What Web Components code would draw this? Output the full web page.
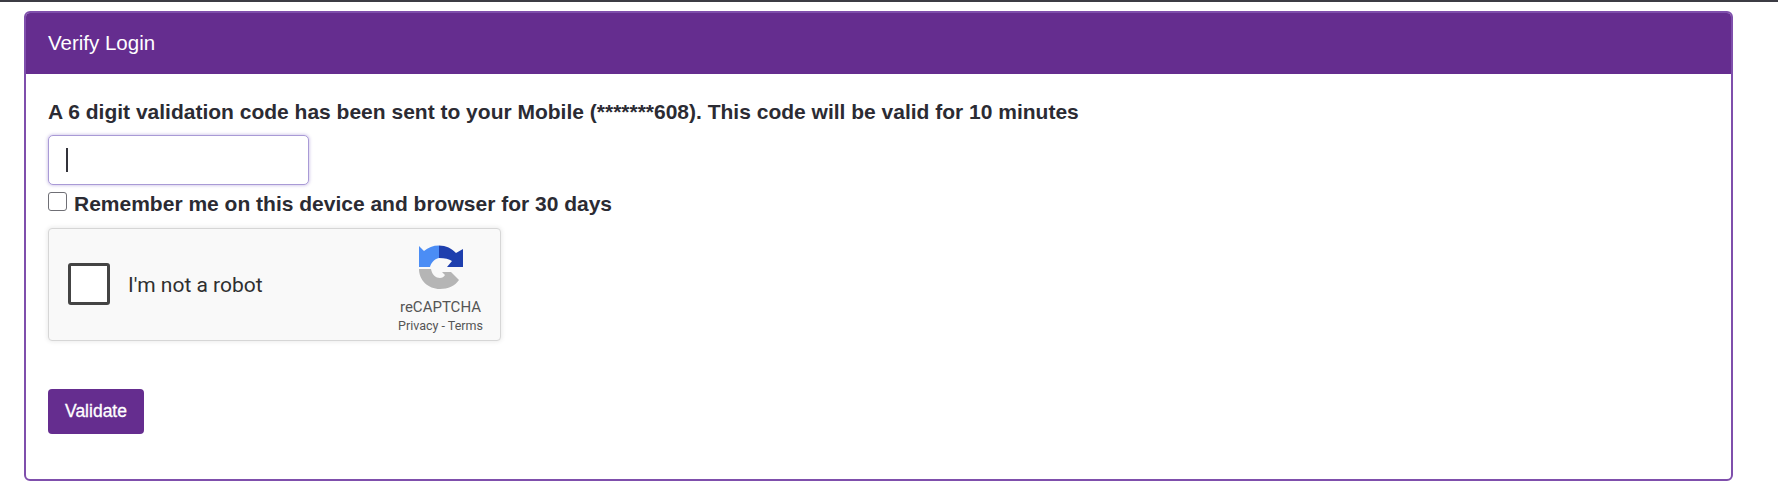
<!DOCTYPE html>
<html>
<head>
<meta charset="utf-8">
<title>Verify Login</title>
<style>
	html, body { margin: 0; background: #fff; }
	body { font-family: "Liberation Sans", Arial, sans-serif; color: #212529; }
</style>
</head>
<body>
<verify-page>
	<verify-card heading="Verify Login">
		<p-label>A 6 digit validation code has been sent to your Mobile (*******608). This code will be valid for 10 minutes</p-label>
		<code-input></code-input>
		<remember-check>Remember me on this device and browser for 30 days</remember-check>
		<fake-recaptcha></fake-recaptcha>
		<purple-button>Validate</purple-button>
	</verify-card>
</verify-page>

<script>
customElements.define('verify-page', class extends HTMLElement
{
	connectedCallback()
	{
		const shadow = this.attachShadow({ mode: 'open' });
		shadow.innerHTML = `
			<style>
				:host { display: block; height: 496px; box-sizing: border-box; border-top: 2px solid #3c3c44; padding: 9px 45px 0 24px; }
			</style>
			<slot></slot>
		`;
	}
});

customElements.define('verify-card', class extends HTMLElement
{
	connectedCallback()
	{
		const shadow = this.attachShadow({ mode: 'open' });
		shadow.innerHTML = `
			<style>
				:host { display: block; height: 470px; box-sizing: border-box; border: 2px solid #7f4fac; border-radius: 6px; overflow: hidden; }
				.head { height: 63px; box-sizing: border-box; margin: -2px -2px 0; background: #652d8f; color: #fff; font-size: 20.5px; padding: 0 24px; display: flex; align-items: center; }
				.body { padding: 26px 22px 0; display: flex; flex-direction: column; align-items: flex-start; }
			</style>
			<div class="head">${this.getAttribute('heading')}</div>
			<div class="body"><slot></slot></div>
		`;
	}
});

customElements.define('p-label', class extends HTMLElement
{
	connectedCallback()
	{
		const shadow = this.attachShadow({ mode: 'open' });
		shadow.innerHTML = `
			<style>
				:host { display: block; font-size: 21px; font-weight: 700; line-height: 24px; color: #2b2b33; margin-bottom: 11px; }
			</style>
			<slot></slot>
		`;
	}
});

customElements.define('code-input', class extends HTMLElement
{
	connectedCallback()
	{
		const shadow = this.attachShadow({ mode: 'open' });
		shadow.innerHTML = `
			<style>
				:host { display: block; width: 261px; height: 50px; box-sizing: border-box; border: 1.5px solid #a99ad6; border-radius: 5px; background: #fff; box-shadow: 0 0 3px 1px rgba(120, 90, 190, .28); padding: 12px 0 0 17px; margin-bottom: 7px; }
				.caret { width: 1.5px; height: 24px; background: #33333a; }
			</style>
			<div class="caret"></div>
		`;
	}
});

customElements.define('remember-check', class extends HTMLElement
{
	connectedCallback()
	{
		const shadow = this.attachShadow({ mode: 'open' });
		shadow.innerHTML = `
			<style>
				:host { display: flex; align-items: center; gap: 7px; font-size: 21px; font-weight: 700; line-height: 24px; color: #2b2b33; margin-bottom: 12px; }
				.box { width: 19px; height: 19px; margin-top: -6px; box-sizing: border-box; border: 1.5px solid #6f6f75; border-radius: 3px; background: #fff; }
			</style>
			<div class="box"></div>
			<span><slot></slot></span>
		`;
	}
});

customElements.define('fake-recaptcha', class extends HTMLElement
{
	connectedCallback()
	{
		const shadow = this.attachShadow({ mode: 'open' });
		shadow.innerHTML = `
			<style>
				:host { display: flex; align-items: center; width: 453px; height: 113px; box-sizing: border-box; background: #f9f9f9; border: 1.5px solid #d6d6d6; border-radius: 4px; box-shadow: 0 0 4px 1px rgba(0, 0, 0, .08); padding-left: 19px; margin-bottom: 48px; font-family: Roboto, "Liberation Sans", sans-serif; color: #2f2f2f; }
				.box { width: 42px; height: 42px; margin-top: -2px; box-sizing: border-box; border: 3px solid #444; border-radius: 3px; background: #fff; margin-right: 18px; }
				.label { font-size: 21px; flex: 1; }
				.brand { width: 119px; padding-top: 3px; display: flex; flex-direction: column; align-items: center; color: #555; }
				svg { width: 64px; height: 60px; display: block; }
				.name { font-size: 15px; line-height: 20px; }
				.links { font-size: 12.5px; line-height: 18px; }
			</style>
			<div class="box"></div>
			<div class="label">I'm not a robot</div>
			<div class="brand">
				<svg viewBox="0 0 64 60">
					<path fill="#1e3fae" d="M30 8.5C37 8.5 43 11.5 47 16L54 12V30H38L43 24C40 22 36 21 30 21Z"/>
					<path fill="#4b8df5" d="M30 8.5C24 8.5 19 10.5 15 14L10 9V30H21C22 26 25 22 30 21Z"/>
					<path fill="#b5b5b5" d="M10 32H22C23 38 27 41 31 41C33 41 35 40 36 38L33 35H42L50 43C46 49 39 52 31 52C19 52 10 43 10 32Z"/>
				</svg>
				<div class="name">reCAPTCHA</div>
				<div class="links">Privacy - Terms</div>
			</div>
		`;
	}
});

customElements.define('purple-button', class extends HTMLElement
{
	connectedCallback()
	{
		const shadow = this.attachShadow({ mode: 'open' });
		shadow.innerHTML = `
			<style>
				:host { display: flex; align-items: center; justify-content: center; width: 96px; height: 45px; background: #652d8f; border-radius: 4px; color: #fff; font-size: 17.5px; -webkit-text-stroke: .3px #fff; }
			</style>
			<slot></slot>
		`;
	}
});
</script>
</body>
</html>
